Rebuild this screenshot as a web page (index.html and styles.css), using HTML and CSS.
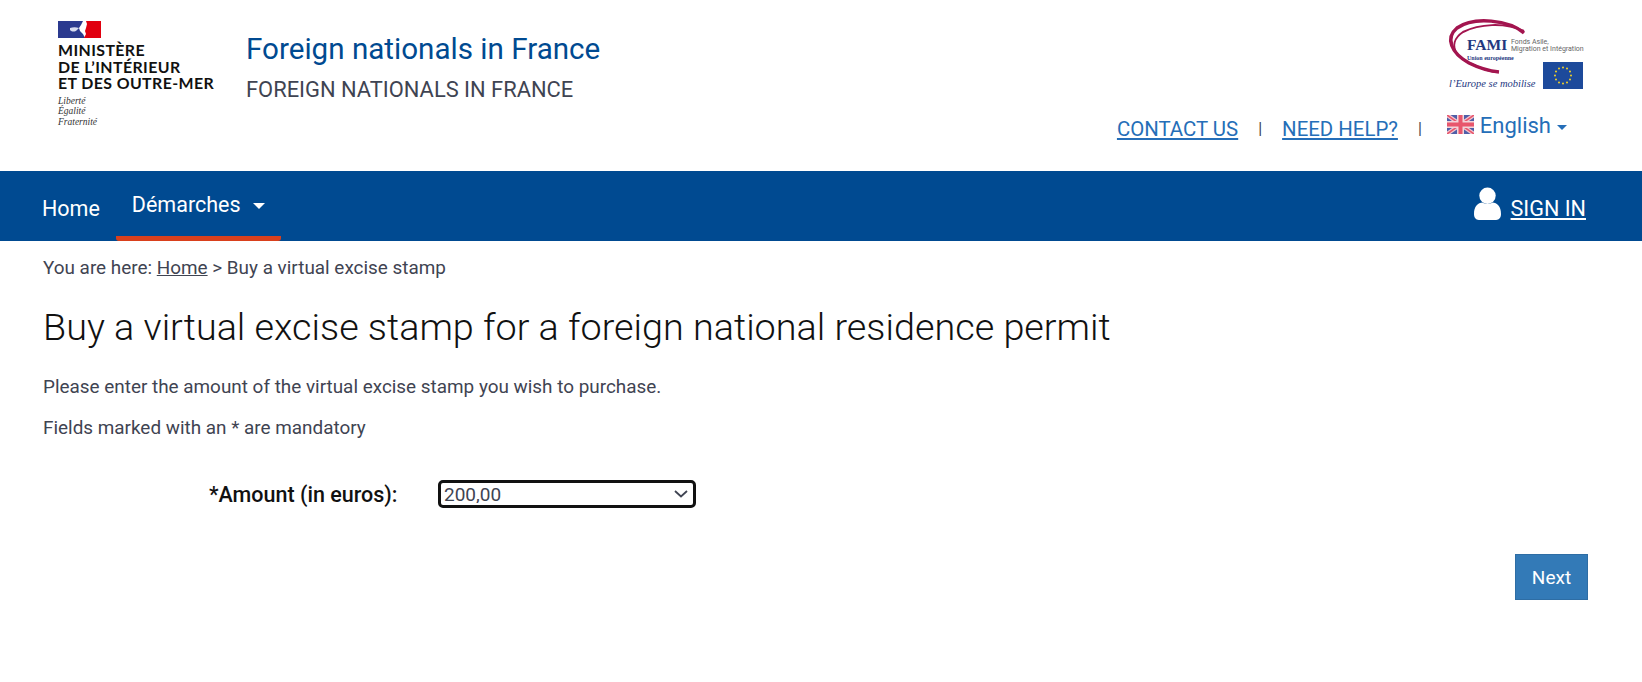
FILE: index.html
```html
<!DOCTYPE html>
<html lang="en">
<head>
    <meta charset="UTF-8">
    <title>Buy a virtual excise stamp</title>
    <link rel="stylesheet" href="styles.css">
</head>
<body>
    <header class="site-header">
        <div class="logo-rf">
            <svg class="rf-flag" width="43" height="17" viewBox="0 0 43 17">
                <rect x="0" y="0" width="20" height="17" fill="#2b3a8f"/>
                <path d="M20 0h5l-2 4-2 3 1 3 3 3 2 4h-7z" fill="#2b3a8f"/>
                <path d="M12 7c3-1 6-1 9 0l-2 2c-2 2-5 2-7 0z" fill="#d8dcef"/>
                <path d="M28 0h15v17H26l2-4-1-3 1-3 1-4z" fill="#e1000f"/>
            </svg>
            <div class="rf-name">MINISTÈRE<br>DE L’INTÉRIEUR<br>ET DES OUTRE-MER</div>
            <div class="rf-motto">Liberté<br>Égalité<br>Fraternité</div>
        </div>
        <div class="site-title">
            <div class="title-main">Foreign nationals in France</div>
            <div class="title-sub">FOREIGN NATIONALS IN FRANCE</div>
        </div>
        <div class="header-right">
            <div class="logo-fami">
                <svg class="fami-swoosh" width="134" height="76" viewBox="0 0 134 76">
                    <path d="M75 15C60 2 25-2 8 10-4 20 2 35 20 45c10 5 20 8 30 9" fill="none" stroke="#a3154f" stroke-width="3.500"/>
                    <path d="M75 13C55 4 30 6 14 14 5 20 3 28 8 36c7 8 22 14 37 18" fill="none" stroke="#a3154f" stroke-width="2"/>
                </svg>
                <span class="fami-word">FAMI</span>
                <span class="fami-fonds">Fonds Asile,<br>Migration et Intégration</span>
                <span class="fami-ue">Union européenne</span>
                <span class="fami-slogan">l’Europe se mobilise</span>
                <svg class="eu-flag" width="40" height="27" viewBox="0 0 40 27">
                    <rect width="40" height="27" fill="#1d4a9b"/>
                    <g fill="#f5d327">
                        <circle cx="20" cy="5.500" r="1"/><circle cx="24" cy="6.600" r="1"/>
                        <circle cx="27" cy="9.500" r="1"/><circle cx="28" cy="13.500" r="1"/>
                        <circle cx="27" cy="17.500" r="1"/><circle cx="24" cy="20.400" r="1"/>
                        <circle cx="20" cy="21.500" r="1"/><circle cx="16" cy="20.400" r="1"/>
                        <circle cx="13" cy="17.500" r="1"/><circle cx="12" cy="13.500" r="1"/>
                        <circle cx="13" cy="9.500" r="1"/><circle cx="16" cy="6.600" r="1"/>
                    </g>
                </svg>
            </div>
            <div class="top-links">
                <a href="#">CONTACT US</a>
                <span class="sep">|</span>
                <a href="#">NEED HELP?</a>
                <span class="sep">|</span>
                <span class="lang">
                    <svg class="uk-flag" width="27" height="19" viewBox="0 0 27 19">
                        <rect width="27" height="19" rx="2" fill="#4f5fa8"/>
                        <path d="M0 0l27 19M27 0L0 19" stroke="#f3c6cf" stroke-width="4"/>
                        <path d="M0 0l27 19M27 0L0 19" stroke="#e8566c" stroke-width="1.500"/>
                        <path d="M13.500 0v19M0 9.500h27" stroke="#f3d5da" stroke-width="7"/>
                        <path d="M13.500 0v19M0 9.500h27" stroke="#e8566c" stroke-width="4"/>
                    </svg>
                    English
                    <span class="caret caret-blue"></span>
                </span>
            </div>
        </div>
    </header>

    <nav class="main-nav">
        <a class="nav-home" href="#">Home</a>
        <a class="nav-item" href="#">Démarches <span class="caret caret-white"></span></a>
        <a class="sign-in" href="#">
            <svg width="27" height="33" viewBox="0 0 28 34">
                <circle cx="14" cy="9" r="8.500" fill="#fff"/>
                <path d="M0 28c0-8 4-12 9-12 3 2 7 2 10 0 5 0 9 4 9 12 0 4-2 6-5 6H5c-3 0-5-2-5-6z" fill="#fff"/>
            </svg>
            <span class="sign-text">SIGN IN</span>
        </a>
    </nav>

    <main class="content">
        <p class="breadcrumb">You are here: <a href="#">Home</a> &gt; Buy a virtual excise stamp</p>
        <h1>Buy a virtual excise stamp for a foreign national residence permit</h1>
        <p class="intro">Please enter the amount of the virtual excise stamp you wish to purchase.</p>
        <p class="mandatory">Fields marked with an * are mandatory</p>
        <form class="amount-form">
            <label for="amount">*Amount (in euros):</label>
            <div class="select-wrap">
                <select id="amount">
                    <option>200,00</option>
                </select>
                <svg class="select-arrow" width="14" height="8" viewBox="0 0 14 8">
                    <path d="M1 1l6 5.500L13 1" fill="none" stroke="#3f4452" stroke-width="1.800"/>
                </svg>
            </div>
        </form>
        <div class="actions">
            <button type="button">Next</button>
        </div>
    </main>
</body>
</html>
```

FILE: styles.css
```css
body {
    font-family: 'Roboto', sans-serif;
    margin: 0;
    background-color: #fff;
    color: #3f4452;
}

a {
    color: inherit;
}

.site-header {
    display: flex;
    height: 171px;
    box-sizing: border-box;
    padding: 21px 58px 0 58px;
}

.logo-rf {
    width: 188px;
}

.rf-flag {
    display: block;
    margin-bottom: 4px;
}

.rf-name {
    font-family: 'Lato', sans-serif;
    font-weight: 700;
    font-size: 15.900px;
    line-height: 16.500px;
    color: #111;
    letter-spacing: 0.4px;
    white-space: nowrap;
}

.rf-motto {
    font-family: 'Liberation Serif', serif;
    font-style: italic;
    font-size: 9.500px;
    line-height: 10.500px;
    color: #333;
    margin-top: 4px;
}

.title-main {
    font-size: 29.600px;
    line-height: 32px;
    color: #004a91;
    margin-top: 12px;
}

.title-sub {
    font-size: 21.900px;
    line-height: 24px;
    color: #3f4452;
    margin-top: 13px;
}

.header-right {
    margin-left: auto;
    width: 490px;
    display: flex;
    flex-direction: column;
    align-items: flex-end;
}

.logo-fami {
    position: relative;
    width: 134px;
    height: 76px;
    margin-top: -3px;
    margin-right: 1px;
}

.fami-swoosh {
    position: absolute;
    left: 0;
    top: 0;
    overflow: visible;
}

.fami-word {
    position: absolute;
    left: 18px;
    top: 18px;
    font-family: 'Liberation Serif', serif;
    font-weight: 700;
    font-size: 15.500px;
    color: #24387f;
}

.fami-fonds {
    position: absolute;
    left: 62px;
    top: 21px;
    font-size: 7px;
    line-height: 7px;
    color: #666;
    white-space: nowrap;
}

.fami-ue {
    position: absolute;
    left: 18px;
    top: 37px;
    font-family: 'Liberation Serif', serif;
    font-weight: 700;
    font-size: 6px;
    color: #24387f;
    white-space: nowrap;
}

.fami-slogan {
    position: absolute;
    left: 0;
    top: 60px;
    font-family: 'Liberation Serif', serif;
    font-style: italic;
    font-size: 10.500px;
    color: #24387f;
    white-space: nowrap;
}

.eu-flag {
    position: absolute;
    right: 0;
    top: 44px;
}

.top-links {
    display: flex;
    align-items: flex-start;
    margin-top: 22px;
    margin-right: 17px;
    font-size: 20.400px;
    line-height: 26px;
    color: #256eb8;
}

.sep {
    color: #3f4452;
    font-size: 16px;
    margin: 0 20px;
}

.lang {
    display: flex;
    align-items: center;
    gap: 6px;
    font-size: 22px;
    margin-left: 5px;
    margin-top: -3px;
}

.uk-flag {
    margin-top: -3px;
}

.caret {
    display: inline-block;
    width: 0;
    height: 0;
    border-left: 5px solid transparent;
    border-right: 5px solid transparent;
}

.caret-blue {
    border-top: 5px solid #256eb8;
    margin-top: 2px;
}

.caret-white {
    border-top: 6px solid #fff;
    border-left-width: 6px;
    border-right-width: 6px;
    margin-left: 7px;
    vertical-align: 3px;
}

.main-nav {
    display: flex;
    height: 70px;
    background-color: #004a91;
    color: #fff;
    padding: 0 56px 0 42px;
}

.main-nav a {
    color: #fff;
}

.nav-home {
    font-size: 21.500px;
    line-height: 26px;
    padding-top: 25px;
    margin-right: 16px;
    text-decoration: none;
}

.nav-item {
    font-size: 21.500px;
    line-height: 26px;
    padding: 21px 16px 0 16px;
    height: 70px;
    box-sizing: border-box;
    border-bottom: 5px solid #d9401c;
    border-radius: 0 0 3px 3px;
    text-decoration: none;
}

.sign-in {
    margin-left: auto;
    display: flex;
    align-items: flex-start;
    gap: 10px;
    padding-top: 16px;
    text-decoration: none;
}

.sign-text {
    font-size: 21.600px;
    line-height: 26px;
    margin-top: 9px;
    text-decoration: underline;
}

.content {
    padding: 0 54px 0 43px;
}

.breadcrumb {
    font-size: 18.900px;
    line-height: 24px;
    margin: 15px 0 0 0;
}

h1 {
    font-weight: 300;
    font-size: 37.750px;
    line-height: 44px;
    color: #111;
    margin: 25px 0 0 0;
}

.intro,
.mandatory {
    font-size: 18.900px;
    line-height: 24px;
    margin: 0;
}

.intro {
    margin-top: 26px;
}

.mandatory {
    margin-top: 17px;
}

.amount-form {
    display: flex;
    align-items: flex-start;
    margin-top: 40px;
    padding-left: 166px;
}

.amount-form label {
    width: 229px;
    font-size: 21.500px;
    font-weight: 500;
    line-height: 26px;
    color: #111;
    margin-top: 2px;
}

.select-wrap {
    position: relative;
    width: 258px;
    height: 28px;
}

.amount-form select {
    appearance: none;
    display: block;
    width: 100%;
    height: 100%;
    box-sizing: border-box;
    border: 3px solid #111;
    border-radius: 5px;
    background-color: #fff;
    color: #3f4452;
    font-family: 'Roboto', sans-serif;
    font-size: 19px;
    padding: 0 0 2px 3px;
}

.select-arrow {
    position: absolute;
    right: 8px;
    top: 10px;
    pointer-events: none;
}

.actions {
    display: flex;
    justify-content: flex-end;
    margin-top: 46px;
}

.actions button {
    width: 73px;
    height: 46px;
    background-color: #337ab7;
    border: 1px solid #2e6da4;
    color: #fff;
    font-family: 'Roboto', sans-serif;
    font-size: 19px;
    font-weight: 400;
    padding: 0;
}
```
